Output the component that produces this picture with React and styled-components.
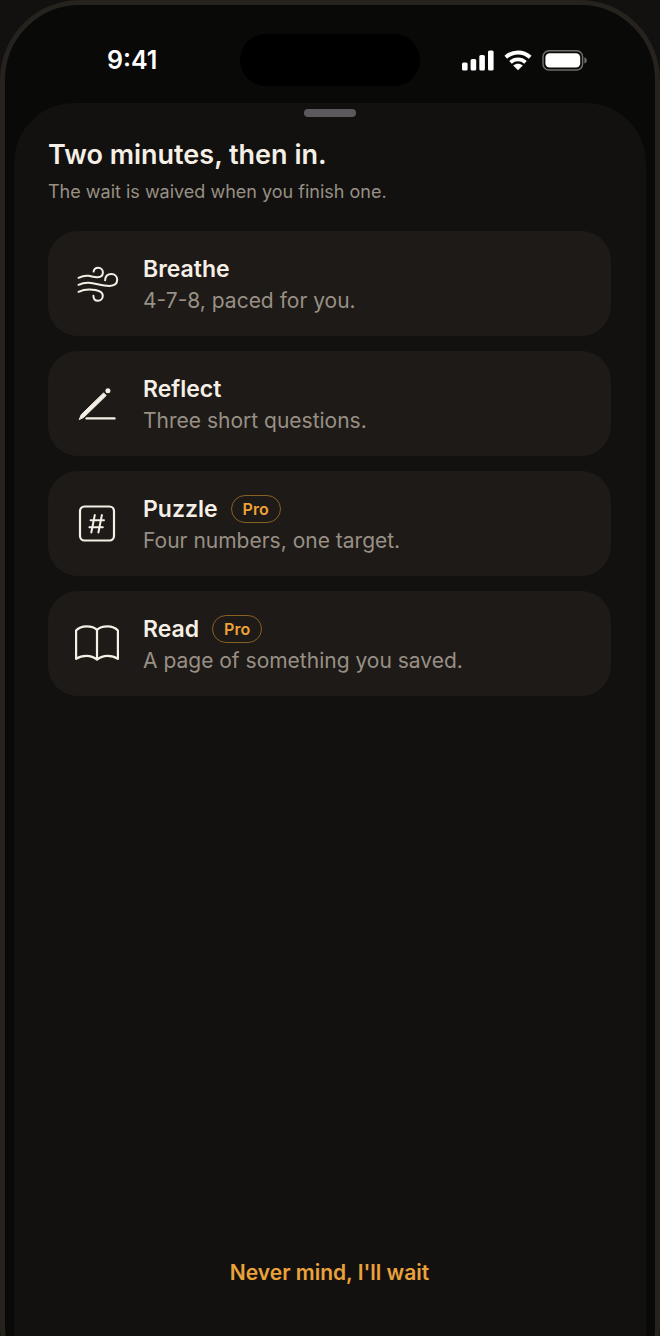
import React from 'react';
import styled, { createGlobalStyle } from 'styled-components';

const GlobalStyle = createGlobalStyle`
  * {
    box-sizing: border-box;
  }
  body {
    margin: 0;
    background-color: #12110f;
    color: #f5efe6;
    font-family: Inter, 'Liberation Sans', sans-serif;
  }
`;

const Viewport = styled.main`
  height: 100vh;
  overflow: hidden;
`;

const Phone = styled.div`
  display: flex;
  flex-direction: column;
  height: calc(100vh + 70px);
  padding: 0 9px 9px;
  border: 5px solid #26221e;
  border-radius: 80px;
  background-color: #090907;
`;

const StatusBar = styled.header`
  display: grid;
  grid-template-columns: 1fr auto 1fr;
  align-items: center;
  padding: 29px 0 17px;
`;

const Time = styled.time`
  padding-left: 93px;
  color: #ffffff;
  font-size: 25px;
  font-weight: 600;
`;

const Island = styled.div`
  width: 180px;
  height: 52px;
  border-radius: 26px;
  background-color: #000000;
`;

const StatusIcons = styled.div`
  display: flex;
  justify-content: flex-end;
  align-items: center;
  gap: 10px;
  padding-right: 58px;
`;

const Sheet = styled.section`
  display: flex;
  flex: 1;
  flex-direction: column;
  align-items: stretch;
  padding: 6px 35px 105px 34px;
  border-radius: 60px;
  background-color: #12110f;
`;

const Grabber = styled.div`
  align-self: center;
  width: 52px;
  height: 8px;
  border-radius: 4px;
  background-color: #5b595b;
`;

const Title = styled.h1`
  margin: 21px 0 0;
  font-size: 27px;
  font-weight: 600;
  line-height: 34px;
`;

const Subtitle = styled.p`
  margin: 8px 0 0;
  color: #989085;
  font-size: 18px;
  line-height: 24px;
`;

const ActivityList = styled.div`
  display: flex;
  flex-direction: column;
  gap: 15px;
  margin-top: 27px;
`;

const ActivityCard = styled.button`
  display: flex;
  align-items: center;
  gap: 22px;
  height: 105px;
  padding: 0 25px;
  border: 0;
  border-radius: 30px;
  background-color: #1e1a17;
  color: inherit;
  font-family: inherit;
  text-align: left;
`;

const ActivityText = styled.span`
  display: flex;
  flex-direction: column;
  gap: 4px;
  padding-top: 3px;
`;

const ActivityHeading = styled.span`
  display: flex;
  align-items: center;
  gap: 13px;
  height: 28px;
  font-size: 23px;
  font-weight: 600;
`;

const ActivityDescription = styled.span`
  color: #989085;
  font-size: 21px;
  line-height: 28px;
`;

const ProBadge = styled.span`
  padding: 0 11px;
  border: 1px solid #8a6024;
  border-radius: 14px;
  color: #eda237;
  font-size: 16px;
  line-height: 26px;
`;

const DismissButton = styled.button`
  align-self: center;
  margin-top: auto;
  padding: 0;
  border: 0;
  background: none;
  color: #eaa23c;
  font-family: inherit;
  font-size: 21px;
  font-weight: 600;
  line-height: 28px;
`;

const Icon = styled.svg`
  flex: none;
  fill: none;
  stroke: currentColor;
  stroke-width: 2;
  stroke-linecap: round;
  stroke-linejoin: round;
`;

const WindIcon = () => (
  <Icon width="48" height="48" viewBox="0 0 48 48" aria-hidden="true">
    <path d="M5.5 17.8C9 16.2 12 15.3 15.5 15.8C18.5 16.2 21.5 17.4 24.5 17.2C27.8 17 29.9 15.1 29.9 12.4C29.9 9.7 28 7.8 25.3 7.8C22.8 7.8 20.9 9.3 20.6 11.6" />
    <path d="M5.5 24.8C9 23.2 12 22.4 16 22.7C22.5 23.2 29.5 26 36.5 25.9C41.5 25.8 44.2 23.4 44.2 19.8C44.2 16.4 41.8 14.1 38.5 14.1C34.8 14.1 32.3 16.4 32.1 20.2" />
    <path d="M5.5 31.8C9 30.2 12 29.3 16.5 29.4C24 29.6 29.8 31.2 29.8 35.7C29.8 38.8 27.7 40.7 25 40.7C22.2 40.7 20.4 38.6 20.4 35.7" />
  </Icon>
);

const PencilIcon = () => (
  <Icon width="48" height="48" viewBox="0 0 48 48" aria-hidden="true">
    <path
      d="M6.4 39.2L8.2 34.7L30.6 12.9L33.2 15.5L10.8 37.3Z"
      fill="currentColor"
      strokeWidth="1"
    />
    <circle cx="34.9" cy="10.7" r="2.5" fill="currentColor" stroke="none" />
    <path d="M13.6 38.4H41.4" strokeWidth="2.4" />
  </Icon>
);

const NumberIcon = () => (
  <Icon width="48" height="48" viewBox="0 0 48 48" aria-hidden="true">
    <rect x="7" y="6.5" width="34" height="34" rx="4.5" strokeWidth="2.2" />
    <path d="M21.8 15L18.3 32.5M28.9 15L25.4 32.5M17.6 20.3H31M16.4 27.3H29.8" />
  </Icon>
);

const BookIcon = () => (
  <Icon width="48" height="48" viewBox="0 0 48 48" aria-hidden="true">
    <path
      d="M24 39.7V10C21.7 7.4 18 6.3 13.5 6.3C9.3 6.3 5.5 7.7 3.1 10.5V38.9C6.2 36.7 9.5 35.8 13.5 35.8C17.8 35.8 21 37.1 24 39.7C27 37.1 30.2 35.8 34.5 35.8C38.5 35.8 41.8 36.7 44.9 38.9V10.5C42.5 7.7 38.7 6.3 34.5 6.3C30 6.3 26.3 7.4 24 10"
      strokeWidth="2.2"
    />
  </Icon>
);

const SignalIcon = () => (
  <svg width="32" height="21" viewBox="0 0 32 21" fill="#fff" aria-hidden="true">
    <rect x="0" y="12.5" width="5.6" height="8" rx="1.5" />
    <rect x="8.6" y="9" width="5.6" height="11.5" rx="1.5" />
    <rect x="17.3" y="5" width="5.6" height="15.5" rx="1.5" />
    <rect x="26" y="0.5" width="5.6" height="20" rx="1.5" />
  </svg>
);

const WifiIcon = () => (
  <svg width="28" height="21" viewBox="0 0 28 21" fill="none" stroke="#fff" aria-hidden="true">
    <path d="M1.8 7.2C8.8 0.8 19.2 0.8 26.2 7.2" strokeWidth="4" />
    <path d="M6.5 12.3C10.8 8.4 17.2 8.4 21.5 12.3" strokeWidth="3.8" />
    <path d="M9.2 15.4C12 13.1 16 13.1 18.8 15.4L14 20.3Z" fill="#fff" stroke="none" />
  </svg>
);

const BatteryIcon = () => (
  <svg width="46" height="21" viewBox="0 0 46 21" aria-hidden="true">
    <rect x="1" y="0.8" width="39.6" height="19.2" rx="6" fill="none" stroke="#6e6e6c" strokeWidth="1.5" />
    <rect x="3.4" y="3.2" width="34.8" height="14.4" rx="4.2" fill="#fff" />
    <path d="M42.4 7.2C45.6 8.4 45.6 12.4 42.4 13.6Z" fill="#6e6e6c" />
  </svg>
);

const activities = [
  { title: 'Breathe', description: '4-7-8, paced for you.', icon: WindIcon },
  { title: 'Reflect', description: 'Three short questions.', icon: PencilIcon },
  { title: 'Puzzle', description: 'Four numbers, one target.', icon: NumberIcon, pro: true },
  { title: 'Read', description: 'A page of something you saved.', icon: BookIcon, pro: true },
];

const Activity = props => {
  const { title, description, icon: ActivityIcon, pro } = props;

  return (
    <ActivityCard type="button">
      <ActivityIcon />
      <ActivityText>
        <ActivityHeading>
          {title}
          {pro && <ProBadge>Pro</ProBadge>}
        </ActivityHeading>
        <ActivityDescription>{description}</ActivityDescription>
      </ActivityText>
    </ActivityCard>
  );
};

const App = () => (
  <>
    <GlobalStyle />
    <Viewport>
      <Phone>
        <StatusBar>
          <Time>9:41</Time>
          <Island />
          <StatusIcons>
            <SignalIcon />
            <WifiIcon />
            <BatteryIcon />
          </StatusIcons>
        </StatusBar>
        <Sheet>
          <Grabber />
          <Title>Two minutes, then in.</Title>
          <Subtitle>The wait is waived when you finish one.</Subtitle>
          <ActivityList>
            {activities.map(activity => (
              <Activity key={activity.title} {...activity} />
            ))}
          </ActivityList>
          <DismissButton type="button">Never mind, I'll wait</DismissButton>
        </Sheet>
      </Phone>
    </Viewport>
  </>
);

export default App;
